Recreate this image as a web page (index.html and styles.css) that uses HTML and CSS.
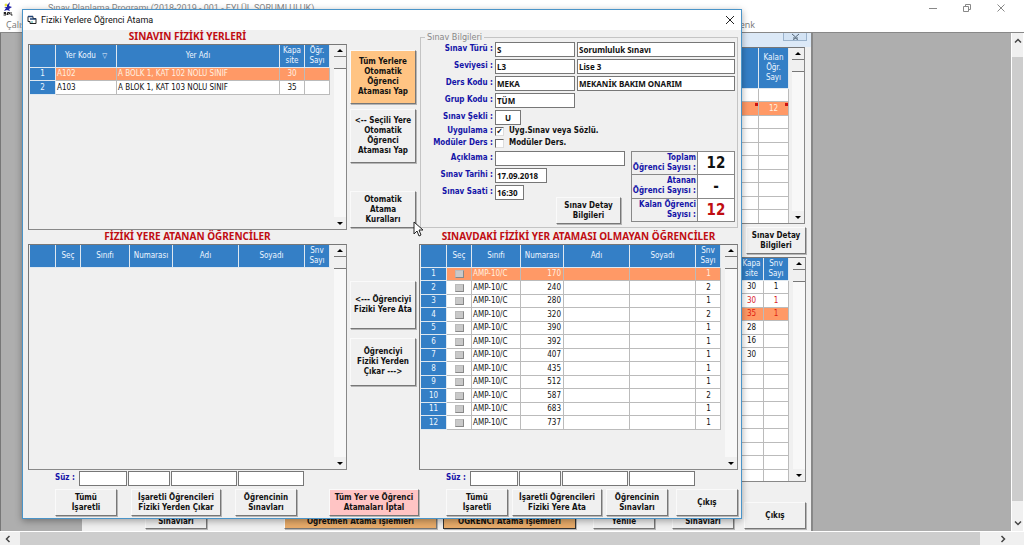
FILE: index.html
```html
<!DOCTYPE html>
<html lang="tr">
<head>
<meta charset="utf-8">
<title>Sınav Planlama Programı</title>
<link rel="stylesheet" href="styles.css">
</head>
<body>
<div class="app">
  <header class="app-title">
    <svg class="logo" width="11" height="15" viewBox="0 0 11 15"><circle cx="4" cy="4" r="1.500" fill="#e8e23a"/><path d="M5 4 8 1 7 5 10 6 7 8 8 10 5 9 2 10 4 7 2 6 5 6Z" fill="#2525a8"/><path d="M4 11.500H2v1h2v1.500H1.500M5.500 14v-2.500h2v1.500h-2M9 11v3h1.500" stroke="#222" fill="none"/></svg>
    <span class="app-name">Sınav Planlama Programı (2018-2019 - 001 - EYLÜL SORUMLULUK)</span>
    <div class="win-controls">
      <button aria-label="Simge durumuna küçült"><svg width="10" height="10" viewBox="0 0 10 10"><path d="M1 5.500h8"/></svg></button>
      <button aria-label="Önceki boyut"><svg width="10" height="10" viewBox="0 0 10 10"><path d="M1.500 3.500h5v5h-5zM3.500 3V1.500h5v5H7"/></svg></button>
      <button aria-label="Kapat"><svg width="10" height="10" viewBox="0 0 10 10"><path d="M1.500 1.500l7 7M8.500 1.500l-7 7"/></svg></button>
    </div>
  </header>
  <nav class="menu"><a href="#">Çalışma</a><a href="#">Renk</a></nav>
  <div class="workspace">
    <div class="desk-left"></div>
    <section class="child">
      <div class="child-bar"><button aria-label="Kapat"><svg width="9" height="9" viewBox="0 0 9 9"><path d="M1 1 4.500 4 8 1M1 8 4.500 5 8 8M2 5h5"/></svg></button></div>
      <div class="frame back-exams">
        <div class="cells">
          <table class="grid">
            <colgroup><col><col class="w30"></colgroup>
            <thead><tr><th></th><th>Kalan<br>Öğr.<br>Sayı</th></tr></thead>
            <tbody>
              <tr><td></td><td></td></tr>
              <tr class="sel"><td class="mark"></td><td class="mark c">12</td></tr>
              <tr><td></td><td></td></tr><tr><td></td><td></td></tr><tr><td></td><td></td></tr><tr><td></td><td></td></tr>
              <tr><td></td><td></td></tr><tr><td></td><td></td></tr><tr><td></td><td></td></tr><tr><td></td><td></td></tr>
            </tbody>
          </table>
        </div>
        <div class="scroll"><button class="up" aria-label="Yukarı"></button><i></i><button class="down" aria-label="Aşağı"></button></div>
      </div>
      <div class="back-detail"><button class="btn">Sınav Detay<br>Bilgileri</button></div>
      <div class="frame back-rooms">
        <div class="cells">
          <table class="grid">
            <colgroup><col><col class="w24"><col class="w25"></colgroup>
            <thead><tr><th></th><th>Kapa<br>site</th><th>Snv<br>Sayı</th></tr></thead>
            <tbody class="c">
              <tr><td></td><td>30</td><td>1</td></tr>
              <tr class="red"><td></td><td>30</td><td>1</td></tr>
              <tr class="sel red"><td></td><td>35</td><td>1</td></tr>
              <tr><td></td><td>28</td><td></td></tr>
              <tr><td></td><td>16</td><td></td></tr>
              <tr><td></td><td>30</td><td></td></tr>
              <tr><td></td><td></td><td></td></tr><tr><td></td><td></td><td></td></tr><tr><td></td><td></td><td></td></tr>
              <tr><td></td><td></td><td></td></tr><tr><td></td><td></td><td></td></tr><tr><td></td><td></td><td></td></tr>
              <tr><td></td><td></td><td></td></tr><tr><td></td><td></td><td></td></tr><tr><td></td><td></td><td></td></tr>
            </tbody>
          </table>
        </div>
        <div class="scroll"><button class="up" aria-label="Yukarı"></button><i></i><button class="down" aria-label="Aşağı"></button></div>
      </div>
      <div class="back-actions">
        <button class="btn w62">Sınavları</button>
        <button class="btn orange teach">Öğretmen Atama İşlemleri</button>
        <button class="btn orange stud">ÖĞRENCİ Atama İşlemleri</button>
        <button class="btn w62 refresh">Yenile</button>
        <button class="btn w62 exams">Sınavları</button>
        <button class="btn w62 exit">Çıkış</button>
      </div>
    </section>
    <div class="desk-right"></div>
    <div class="vbar">
      <button aria-label="Yukarı kaydır"><svg width="8" height="8" viewBox="0 0 8 8"><path d="M1 5.500 4 2.500 7 5.500"/></svg></button>
      <span></span>
      <button aria-label="Aşağı kaydır"><svg width="8" height="8" viewBox="0 0 8 8"><path d="M1 2.500 4 5.500 7 2.500"/></svg></button>
    </div>
  </div>
  <div class="hbar">
    <button aria-label="Sola kaydır"><svg width="8" height="8" viewBox="0 0 8 8"><path d="M5.500 1 2.500 4 5.500 7"/></svg></button>
    <span></span>
    <button class="end" aria-label="Sağa kaydır"><svg width="8" height="8" viewBox="0 0 8 8"><path d="M2.500 1 5.500 4 2.500 7"/></svg></button>
  </div>
</div>

<main class="dialog">
  <header class="dialog-title">
    <svg width="10" height="10" viewBox="0 0 10 10"><path d="M1 1.500h5v2h3v5H3v-2H1z" fill="#fff" stroke="#222"/><path d="M1 1.500h5M3 4h6" stroke="#247" stroke-width="1.500"/><path d="M4 7h2" stroke="#2aa0a0"/></svg>
    <h1>Fiziki Yerlere Öğrenci Atama</h1>
    <button aria-label="Kapat"><svg width="10" height="10" viewBox="0 0 10 10"><path d="M1 1l8 8M9 1l-8 8"/></svg></button>
  </header>
  <div class="dialog-body">
    <section class="pane">
      <h2>SINAVIN FİZİKİ YERLERİ</h2>
      <div class="frame">
        <div class="cells">
          <table class="grid">
            <colgroup><col class="w26"><col class="w61"><col><col class="w25"><col class="w25"></colgroup>
            <thead><tr><th></th><th>Yer Kodu <span class="sort">▽</span></th><th>Yer Adı</th><th>Kapa<br>site</th><th>Öğr.<br>Sayı</th></tr></thead>
            <tbody>
              <tr class="sel"><th>1</th><td>A102</td><td>A BOLK 1, KAT 102 NOLU SINIF</td><td class="c">30</td><td></td></tr>
              <tr><th>2</th><td>A103</td><td>A BLOK 1, KAT 103 NOLU SINIF</td><td class="c">35</td><td></td></tr>
            </tbody>
          </table>
        </div>
        <div class="scroll"><button class="up" aria-label="Yukarı"></button><i></i><button class="down" aria-label="Aşağı"></button></div>
      </div>
    </section>
    <div class="mid mid-top">
      <button class="btn orange h54">Tüm Yerlere<br>Otomatik<br>Öğrenci<br>Ataması Yap</button>
      <button class="btn h54">&lt;-- Seçili Yere<br>Otomatik<br>Öğrenci<br>Ataması Yap</button>
      <button class="btn h37 last">Otomatik<br>Atama<br>Kuralları</button>
    </div>
    <fieldset class="info">
      <legend>Sınav Bilgileri</legend>
      <div class="form">
        <label for="tur">Sınav Türü :</label><input id="tur" value="S"><input aria-label="Sınav türü adı" value="Sorumluluk Sınavı">
        <label for="sev">Seviyesi :</label><input id="sev" value="L3"><input aria-label="Seviye adı" value="Lise 3">
        <label for="ders">Ders Kodu :</label><input id="ders" value="MEKA"><input aria-label="Ders adı" value="MEKANİK BAKIM ONARIM">
        <label for="grup">Grup Kodu :</label><input id="grup" value="TÜM">
        <label class="first" for="sekil">Sınav Şekli :</label><input id="sekil" class="tiny" value="U">
      </div>
      <div class="checks">
        <span>Uygulama :</span><label><input type="checkbox" checked>Uyg.Sınav veya Sözlü.</label>
        <span>Modüler Ders :</span><label><input type="checkbox">Modüler Ders.</label>
      </div>
      <div class="lower">
        <div class="times">
          <label for="acik">Açıklama :</label><input id="acik" class="wide">
          <label for="tarih">Sınav Tarihi :</label><input id="tarih" value="17.09.2018">
          <label for="saat">Sınav Saati :</label><input id="saat" class="hour" value="16:30">
          <button class="btn detail">Sınav Detay<br>Bilgileri</button>
        </div>
        <table class="totals">
          <tr><th>Toplam<br>Öğrenci Sayısı :</th><td>12</td></tr>
          <tr><th>Atanan<br>Öğrenci Sayısı :</th><td>-</td></tr>
          <tr><th>Kalan Öğrenci<br>Sayısı :</th><td class="left-over">12</td></tr>
        </table>
      </div>
    </fieldset>

    <section class="pane">
      <h2>FİZİKİ YERE ATANAN ÖĞRENCİLER</h2>
      <div class="frame">
        <div class="cells">
          <table class="grid">
            <colgroup><col class="w26"><col class="w25"><col class="w49"><col class="w43"><col><col><col class="w25"></colgroup>
            <thead><tr><th></th><th>Seç</th><th>Sınıfı</th><th>Numarası</th><th>Adı</th><th>Soyadı</th><th>Snv<br>Sayı</th></tr></thead>
          </table>
        </div>
        <div class="scroll"><button class="up" aria-label="Yukarı"></button><i></i><button class="down" aria-label="Aşağı"></button></div>
      </div>
    </section>
    <div class="mid mid-low">
      <button class="btn h48">&lt;--- Öğrenciyi<br>Fiziki Yere Ata</button>
      <button class="btn h48">Öğrenciyi<br>Fiziki Yerden<br>Çıkar ---&gt;</button>
    </div>
    <section class="pane">
      <h2>SINAVDAKİ FİZİKİ YER ATAMASI OLMAYAN ÖĞRENCİLER</h2>
      <div class="frame">
        <div class="cells">
          <table class="grid students">
            <colgroup><col class="w26"><col class="w25"><col class="w49"><col class="w43"><col><col><col class="w25"></colgroup>
            <thead><tr><th></th><th>Seç</th><th>Sınıfı</th><th>Numarası</th><th>Adı</th><th>Soyadı</th><th>Snv<br>Sayı</th></tr></thead>
            <tbody>
              <tr class="sel"><th>1</th><td><input type="checkbox" aria-label="Seç 1"></td><td>AMP-10/C</td><td>170</td><td></td><td></td><td>1</td></tr>
              <tr><th>2</th><td><input type="checkbox" aria-label="Seç 2"></td><td>AMP-10/C</td><td>240</td><td></td><td></td><td>2</td></tr>
              <tr><th>3</th><td><input type="checkbox" aria-label="Seç 3"></td><td>AMP-10/C</td><td>280</td><td></td><td></td><td>1</td></tr>
              <tr><th>4</th><td><input type="checkbox" aria-label="Seç 4"></td><td>AMP-10/C</td><td>320</td><td></td><td></td><td>2</td></tr>
              <tr><th>5</th><td><input type="checkbox" aria-label="Seç 5"></td><td>AMP-10/C</td><td>390</td><td></td><td></td><td>1</td></tr>
              <tr><th>6</th><td><input type="checkbox" aria-label="Seç 6"></td><td>AMP-10/C</td><td>392</td><td></td><td></td><td>1</td></tr>
              <tr><th>7</th><td><input type="checkbox" aria-label="Seç 7"></td><td>AMP-10/C</td><td>407</td><td></td><td></td><td>1</td></tr>
              <tr><th>8</th><td><input type="checkbox" aria-label="Seç 8"></td><td>AMP-10/C</td><td>435</td><td></td><td></td><td>1</td></tr>
              <tr><th>9</th><td><input type="checkbox" aria-label="Seç 9"></td><td>AMP-10/C</td><td>512</td><td></td><td></td><td>1</td></tr>
              <tr><th>10</th><td><input type="checkbox" aria-label="Seç 10"></td><td>AMP-10/C</td><td>587</td><td></td><td></td><td>2</td></tr>
              <tr><th>11</th><td><input type="checkbox" aria-label="Seç 11"></td><td>AMP-10/C</td><td>683</td><td></td><td></td><td>1</td></tr>
              <tr><th>12</th><td><input type="checkbox" aria-label="Seç 12"></td><td>AMP-10/C</td><td>737</td><td></td><td></td><td>1</td></tr>
            </tbody>
          </table>
        </div>
        <div class="scroll"><button class="up" aria-label="Yukarı"></button><i></i><button class="down" aria-label="Aşağı"></button></div>
      </div>
    </section>

    <div class="filter"><label for="f1">Süz :</label><input id="f1"><input class="num" aria-label="Numara süz"><input class="name" aria-label="Ad süz"><input class="name" aria-label="Soyad süz"></div>
    <span></span>
    <div class="filter"><label for="f2">Süz :</label><input id="f2"><input class="num" aria-label="Numara süz"><input class="name" aria-label="Ad süz"><input class="name" aria-label="Soyad süz"></div>

    <div class="actions assigned">
      <button class="btn w62">Tümü<br>İşaretli</button>
      <button class="btn w90">İşaretli Öğrencileri<br>Fiziki Yerden Çıkar</button>
      <button class="btn w62">Öğrencinin<br>Sınavları</button>
    </div>
    <div class="actions cancel"><button class="btn pink w90">Tüm Yer ve Öğrenci<br>Atamaları İptal</button></div>
    <div class="actions waiting">
      <button class="btn w62">Tümü<br>İşaretli</button>
      <button class="btn w90">İşaretli Öğrencileri<br>Fiziki Yere Ata</button>
      <button class="btn w62">Öğrencinin<br>Sınavları</button>
      <button class="btn w62 close">Çıkış</button>
    </div>
  </div>
</main>
<svg class="cursor" width="11" height="17" viewBox="0 0 11 17"><path d="M1 1v12l3-3 2 5 2-1-2-5h4z" fill="#fff" stroke="#222"/></svg>
</body>
</html>
```
FILE: styles.css
```css
* { box-sizing: border-box; }
body {
  margin: 0;
  position: relative;
  min-height: 100vh;
  font: 8px/10px "DejaVu Sans Condensed", "DejaVu Sans", sans-serif;
  color: #111;
  background: #fff;
  overflow: hidden;
}
button, input { font: inherit; color: inherit; margin: 0; padding: 0; border-radius: 0; }
button { border: 0; background: none; }
svg { display: block; fill: none; }

/* main window */
.app { display: flex; flex-direction: column; height: 100vh; min-height: 545px; }
.app-title { display: flex; align-items: center; height: 16px; padding-left: 2px; font-family: Roboto, sans-serif; color: #888; }
.app-name { flex: 1; margin-left: 35px; font-size: 9px; }
.win-controls { display: flex; gap: 24px; padding-right: 18px; }
.win-controls svg { stroke: #888; }
.menu { display: flex; justify-content: space-between; height: 17px; padding: 3px 269px 0 6px; border-bottom: 1px solid #888; font: 9px/12px "Open Sans", sans-serif; }
.menu a { color: #777; text-decoration: none; }
.workspace { flex: 1; display: flex; min-height: 0; background: #aeaeae; border-left: 1px solid #777; }
.desk-left { width: 81px; }
.desk-right { width: 200px; border-left: 2px solid #888; }
.child { flex: 1; display: flex; flex-direction: column; background: #f0f0f0; min-width: 0; }
.child-bar { display: flex; justify-content: flex-end; height: 14px; flex: none; padding-right: 4px; background: #dce9f7; }
.child-bar button { width: 24px; height: 8px; border: 1px solid #9bb3cc; border-top: 0; background: #d3e3f4; overflow: hidden; display: flex; justify-content: center; }
.child-bar svg { stroke: #567; }
.child .back-exams { flex: none; height: 177px; margin-right: 6px; }
.child .back-exams thead tr { height: 41px; }
.back-exams .scroll { margin-left: 3px; }
.back-detail { display: flex; justify-content: flex-end; padding: 3px 5px 3px 0; }
.back-detail .btn { width: 60px; height: 27px; }
.back-rooms { margin-right: 5px; }
.back-actions { display: flex; align-items: flex-end; flex: none; height: 49px; padding: 0 5px 2px 63px; }
.back-actions .btn { height: 27px; padding-top: 12px; }
.back-actions .teach { width: 153px; margin-left: 77px; }
.back-actions .stud { width: 133px; margin-left: 6px; border: 1px solid #333; }
.back-actions .refresh { margin-left: 17px; }
.back-actions .exams { margin-left: 17px; }
.back-actions .exit { margin-left: auto; padding-top: 0; }
.vbar { width: 13px; display: flex; flex-direction: column; background: #f0f0f0; border: 0 solid #fff; border-width: 0 1px; }
.vbar span { flex: 1; background: #cdcdcd; }
.vbar button { height: 24px; display: flex; justify-content: center; padding-top: 4px; }
.vbar button:last-child { height: 30px; padding-top: 18px; }
.vbar svg, .hbar svg { stroke: #444; stroke-width: 1.500; }
.hbar { display: flex; height: 14px; background: #f0f0f0; border-top: 1px solid #fff; }
.hbar span { flex: 1; background: #cdcdcd; }
.hbar button { width: 20px; display: flex; align-items: center; padding-left: 4px; }
.hbar .end { width: 44px; padding-left: 19px; }

/* shared controls */
.btn {
  display: flex; align-items: center; justify-content: center; text-align: center;
  flex: none; background: #f0f0f0; font-weight: bold; white-space: nowrap;
  border: 1px solid; border-color: #fafafa #777 #777 #fafafa;
  box-shadow: 1px 1px 0 #b5b5b5;
}
.orange { background: #ffc483; }
.back-actions .orange { background: #e9ac6a; }
.pink { background: #ffc4c4; }
.w62 { width: 62px; }
.w90 { width: 90px; }
.h54 { height: 54px; }
.h48 { height: 48px; }
.h37 { height: 37px; }

.frame { display: flex; flex: 1; min-height: 0; border: 1px solid; border-color: #777 #888 #888 #777; background: #f0f0f0; overflow: hidden; }
.cells { flex: 1; min-width: 0; padding-left: 1px; }
.grid { width: 100%; table-layout: fixed; border-collapse: separate; border-spacing: 0; }
.grid th { padding: 0; color: #eef6ff; background: #347fc6; font-weight: normal; border-right: 1px solid #dfe8f0; border-bottom: 1px solid #dfe8f0; }
.grid thead tr { height: 23px; }
.grid tbody tr { height: 13px; }
.grid tbody tr:nth-child(even) { height: 14px; }
.grid td { padding: 0 0 0 1px; background: #fff; border-right: 1px solid #bbb; border-bottom: 1px solid #bbb; white-space: nowrap; overflow: hidden; }
.grid .sel td { background: #ff9966; color: #fff0e0; }
.grid .red td { color: #d8232a; }
.grid .sel.red td { color: #e02010; }
.grid .c, .grid .c td { text-align: center; padding: 0; }
.grid .sel .mark { background: linear-gradient(#c11, #c11) right 0 top 1px / 3px 3px no-repeat #ff9966; }
.sort { font-size: 7px; margin-left: 4px; }
col.w24 { width: 24px; }
col.w25 { width: 25px; }
col.w26 { width: 26px; }
col.w30 { width: 30px; }
col.w43 { width: 43px; }
col.w49 { width: 49px; }
col.w61 { width: 61px; }

.students td:nth-child(4) { text-align: right; padding-right: 2px; }
.students td:nth-child(7) { text-align: center; }
.students td input { display: block; appearance: none; width: 9px; height: 8px; margin: 0 auto; background: #c9c9c9; border: 1px solid; border-color: #bbb #888 #888 #bbb; }

.scroll { width: 12px; flex: none; margin-left: 4px; display: flex; flex-direction: column; background: #f8f8f8; }
.scroll button { height: 12px; background: #f0f0f0; border-bottom: 1px solid #777; display: flex; align-items: center; justify-content: center; }
.scroll i { height: 12px; background: #f0f0f0; border-bottom: 1px solid #777; }
.scroll .down { margin-top: auto; border-bottom: 0; }
.scroll button::before { content: ""; border: 3px solid transparent; }
.scroll .up::before { border-top: 0; border-bottom-color: #000; }
.scroll .down::before { border-bottom: 0; border-top-color: #000; }

/* dialog */
.dialog { position: absolute; inset: 9px 282px 26px 22px; display: flex; flex-direction: column; border: 1px solid #4a94c8; background: #f0f0f0; box-shadow: 0 2px 7px rgba(0, 0, 0, .35); }
.dialog-title { display: flex; align-items: center; height: 20px; flex: none; padding: 0 6px 0 4px; background: #fff; }
.dialog-title h1 { flex: 1; margin: 0 0 0 4px; font: 9px/12px Roboto, sans-serif; }
.dialog-title button svg { stroke: #222; }
.dialog-body { flex: 1; display: grid; grid-template-columns: minmax(0, 1fr) 72px minmax(0, 1fr); grid-template-rows: 200px minmax(0, 1fr) 17px 31px; padding: 0 3px 0 5px; min-height: 0; }
.pane { display: flex; flex-direction: column; min-height: 0; }
.pane h2 { margin: 0; height: 14px; font: bold 10px/13px "Noto Sans", sans-serif; text-align: center; color: #c00d12; white-space: nowrap; }
.mid { display: flex; flex-direction: column; padding: 20px 3px 2px; gap: 5px; }
.mid .last { margin-top: auto; }
.mid-low { padding-top: 51px; gap: 9px; }

.info { margin: 2px 0 2px 1px; padding: 0 2px 0 0; border: 1px solid #c4c4c4; min-width: 0; font-weight: bold; }
.info legend { margin-left: 4px; padding: 0 2px; color: #888; font-size: 9px; font-weight: normal; line-height: 10px; }
.info label, .checks span, .filter label { color: #1414a8; text-align: right; font-weight: bold; }
.form label, .times label { line-height: 14px; }
.info input:not([type]), .filter input { width: 100%; min-width: 0; height: 15px; border: 1px solid #777; background: #fff; padding: 0 1px; font: bold 8px/13px "Noto Sans", sans-serif; }
.form { display: grid; grid-template-columns: 72px 80px minmax(0, 1fr); gap: 2px; }
.form .first { grid-column: 1; }
.info input.tiny { width: 26px; text-align: center; }
.checks { display: grid; grid-template-columns: 72px 1fr; column-gap: 2px; padding: 0 0 2px; line-height: 12px; }
.checks span { text-align: right; }
.info .checks label { display: flex; align-items: center; gap: 5px; color: #111; }
.checks input { appearance: none; display: grid; place-items: center; width: 9px; height: 9px; border: 1px solid; border-color: #666 #ddd #ddd #666; background: #fff; }
.checks input:checked::before { content: "✔"; font-size: 8px; line-height: 7px; }
.lower { display: flex; gap: 6px; }
.times { flex: 1; display: grid; grid-template-columns: 72px 52px 1fr; grid-template-rows: 15px 15px 15px 22px; gap: 2px; }
.info .wide { grid-column: 2 / 4; }
.info input.hour { width: 29px; }
.times .detail { grid-area: 2 / 3 / 5 / 4; align-self: end; justify-self: end; width: 65px; height: 27px; margin-right: 4px; }
.totals { width: 104px; height: 71px; table-layout: fixed; border-collapse: collapse; }
.totals th { padding: 0 1px 0 0; border: 1px solid #888; text-align: right; color: #1414a8; white-space: nowrap; width: 66px; }
.totals td { padding: 0; border: 1px solid #888; background: #fff; text-align: center; font-size: 15px; line-height: 16px; }
.totals .left-over { color: #c00d12; }

.filter { display: flex; gap: 1px; padding: 1px 0 1px 27px; }
.filter label { width: 23px; line-height: 14px; text-align: left; white-space: nowrap; }
.filter input { width: 48px; }
.filter input.num { width: 42px; }
.filter input.name { flex: 0 1 66px; }
.actions { display: flex; height: 27px; margin-top: 2px; }
.assigned { gap: 14px; padding-left: 27px; }
.cancel { justify-content: flex-end; }
.waiting { gap: 4px; padding-left: 27px; }
.waiting .close { margin-left: auto; }

.cursor { position: absolute; left: 413px; top: 221px; }
```
